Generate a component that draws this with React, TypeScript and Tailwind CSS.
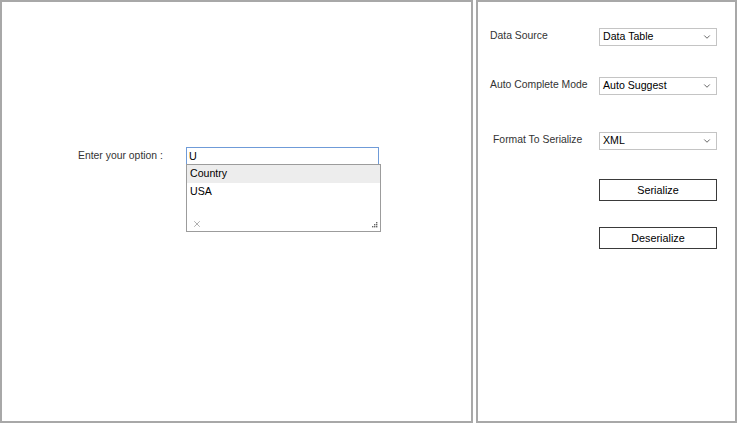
import { ChevronDown, X } from "lucide-react";

const font = { fontFamily: '"Liberation Sans", Arial, sans-serif' };

function Select({ value }: { value: string }) {
  return (
    <div className="flex h-[18px] w-[118px] items-center justify-between border border-[#c4c4c4] bg-white pl-[3px] pr-[4px] text-[10.6px] text-black">
      <span>{value}</span>
      <ChevronDown className="size-[10px] text-[#333]" strokeWidth={1.8} />
    </div>
  );
}

function Row({ label, value, className, indent }: { label: string; value: string; className?: string; indent?: boolean }) {
  return (
    <div className={`flex items-start ${className ?? ""}`}>
      <div className={`w-[109px] pt-[1px] text-[10.4px] leading-[14px] text-[#333] ${indent ? "pl-[3px]" : ""}`}>{label}</div>
      <Select value={value} />
    </div>
  );
}

export default function App() {
  return (
    <div className="flex h-[424px] w-[738px] bg-white" style={font}>
      {/* Autocomplete sample */}
      <div className="h-[423px] w-[473px] border-2 border-[#a8a8a8] pt-[145px]">
        <div className="flex items-center pl-[76px]">
          <div className="w-[108px] text-[10.4px] text-[#333]">Enter your option :</div>
          <div className="relative">
            <div className="flex h-[18px] w-[193px] items-center border border-[#6f9bd8] px-[2px] text-[10.8px] text-black">
              U
            </div>
            <div className="absolute left-0 top-[17px] flex h-[68px] w-[195px] flex-col border border-[#9c9c9c] bg-white text-[10.6px] text-black">
              <div className="flex h-[18px] items-center bg-[#ededed] px-[3px]">Country</div>
              <div className="flex h-[18px] items-center px-[3px]">USA</div>
              <div className="mt-auto flex h-[14px] items-center justify-between pl-[5px] pr-[2px]">
                <X className="size-[10px] text-[#777]" strokeWidth={1.4} />
                <svg width="7" height="7" viewBox="0 0 7 7" className="fill-[#666]">
                  <rect x="5" y="1" width="1.4" height="1.4" />
                  <rect x="3" y="3" width="1.4" height="1.4" />
                  <rect x="5" y="3" width="1.4" height="1.4" />
                  <rect x="1" y="5" width="1.4" height="1.4" />
                  <rect x="3" y="5" width="1.4" height="1.4" />
                  <rect x="5" y="5" width="1.4" height="1.4" />
                </svg>
              </div>
            </div>
          </div>
        </div>
      </div>

      {/* Properties panel */}
      <div className="ml-[3px] h-[423px] w-[261px] border-2 border-[#a8a8a8] pl-[12px] pt-[26px]">
        <Row label="Data Source" value="Data Table" />
        <Row label="Auto Complete Mode" value="Auto Suggest" className="mt-[31px]" />
        <Row label="Format To Serialize" value="XML" className="mt-[37px]" indent />
        <div className="mt-[29px] flex flex-col gap-[26px] pl-[109px]">
          <button className="h-[22px] w-[118px] border border-[#3a3a3a] bg-white text-[10.8px] text-black">Serialize</button>
          <button className="h-[22px] w-[118px] border border-[#3a3a3a] bg-white text-[10.8px] text-black">Deserialize</button>
        </div>
      </div>
    </div>
  );
}
